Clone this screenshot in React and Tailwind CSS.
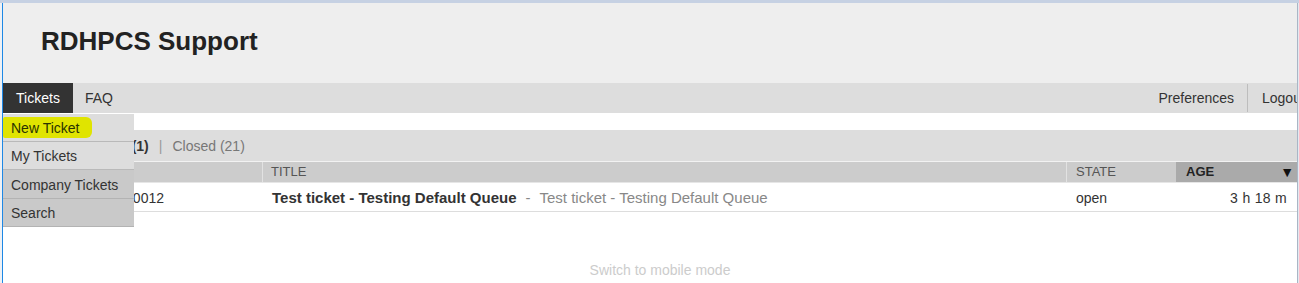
export default function App() {
  return (
    <div className="relative w-[1299px] h-[283px] overflow-hidden bg-white font-['Liberation_Sans',Arial,sans-serif] text-[#333]">
      <div className="h-[3px] bg-[#c6d1e3]" />
      <div className="flex h-[280px]">
        <div className="w-[2px] bg-[#eef1f5]" />
        <div className="w-px bg-[#1e88e5]" />
        <div className="relative w-[1294px]">
          {/* Header */}
          <div className="h-[80px] bg-[#eeeeee] flex items-center pl-[38px] pb-[4px]">
            <h1 className="text-[26px] font-bold text-[#222] leading-none">RDHPCS Support</h1>
          </div>
          {/* Nav */}
          <div className="h-[30px] bg-[#dddddd] flex text-[14px]">
            <div className="w-[70px] bg-[#333333] text-white flex items-center justify-center">Tickets</div>
            <div className="px-[12px] flex items-center text-[#333]">FAQ</div>
            <div className="ml-auto flex">
              <div className="px-[13px] flex items-center border-r border-[#bdbdbd] my-[1px]">Preferences</div>
              <div className="w-[49px] pl-[14px] flex items-center overflow-hidden whitespace-nowrap">Logout</div>
            </div>
          </div>
          <div className="h-[17px]" />
          {/* Tabs bar */}
          <div className="h-[31px] bg-[#dddddd] flex items-center text-[14px] pt-[2px]">
            <span className="ml-[89px] font-bold text-[#333]">Open (1)</span>
            <span className="mx-[10px] text-[#999]">|</span>
            <span className="text-[#777]">Closed (21)</span>
          </div>
          <div className="h-px bg-[#f2f2f2]" />
          {/* Table header */}
          <div className="h-[20px] bg-[#cccccc] flex text-[13px] uppercase text-[#555] border-b border-[#e6e6e6] box-content">
            <div className="w-[259px]" />
            <div className="w-[804px] border-l border-[#e2e2e2] pl-[8px] flex items-center">Title</div>
            <div className="w-[110px] border-l border-[#e2e2e2] pl-[9px] flex items-center">State</div>
            <div className="w-[121px] bg-[#aaaaaa] pl-[10px] pr-[3px] flex items-center justify-between font-bold text-[#222]">
              <span>Age</span>
              <span className="text-[14px] text-[#111]">▼</span>
            </div>
          </div>
          {/* Row */}
          <div className="h-[29px] flex items-center text-[14px] border-b border-[#dddddd] pt-[3px]">
            <div className="w-[161px] text-right overflow-hidden whitespace-nowrap">#20240100012</div>
            <div className="w-[98px]" />
            <div className="w-[804px] pl-[10px] whitespace-nowrap text-[15px]">
              <span className="font-bold text-[#333]">Test ticket - Testing Default Queue</span>
              <span className="mx-[9px] text-[#888]">-</span>
              <span className="text-[#888]">Test ticket - Testing Default Queue</span>
            </div>
            <div className="w-[110px] pl-[10px]">open</div>
            <div className="w-[121px] pr-[10px] text-right tracking-[0.3px]">3 h 18 m</div>
          </div>
          {/* Footer */}
          <div className="mt-[50px] pl-[20px] text-center text-[14px] leading-[16px] text-[#cccccc]">Switch to mobile mode</div>

          {/* Dropdown menu */}
          <div className="absolute left-0 top-[111px] w-[131px] text-[14px] text-[#333]">
            <div className="relative h-[28px] bg-[#dddddd] border-b border-[#b9b9b9] flex items-center pl-[8px] pt-[2px]">
              <span className="absolute left-0 top-[3px] w-[89px] h-[21px] bg-[#e0e400] rounded-r-[6px] rounded-l-[2px]" />
              <span className="relative text-[#2a3300]">New Ticket</span>
            </div>
            <div className="h-[28px] bg-[#dddddd] border-b border-[#b9b9b9] flex items-center pl-[8px] pt-[2px]">My Tickets</div>
            <div className="h-[29px] bg-[#c9c9c9] border-b border-[#b3b3b3] flex items-center pl-[8px] pt-[2px]">Company Tickets</div>
            <div className="h-[28px] bg-[#c9c9c9] border-b border-[#b3b3b3] flex items-center pl-[8px] pt-[2px]">Search</div>
          </div>
        </div>
        <div className="w-px bg-[#a9b6c6]" />
        <div className="w-px bg-[#e4e9f0]" />
      </div>
    </div>
  );
}
